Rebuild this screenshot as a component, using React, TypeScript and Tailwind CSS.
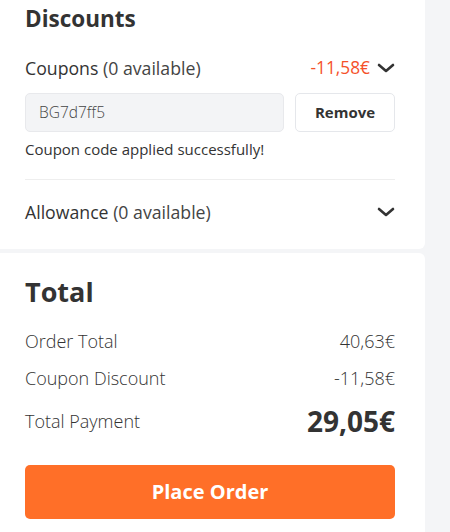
import React from "react";

function Chevron() {
  return (
    <svg width="18" height="10" viewBox="0 0 18 10" fill="none">
      <path d="M2 2 L9 8 L16 2" stroke="#333333" strokeWidth="2.6" strokeLinecap="round" strokeLinejoin="round" />
    </svg>
  );
}

export default function App() {
  return (
    <div
      className="w-[450px] min-h-[532px] bg-[#f4f5f7] text-[#333333]"
      style={{ fontFamily: '"Open Sans", "Noto Sans", sans-serif' }}
    >
      <div className="w-[425px] flex flex-col gap-[4px]">
        <div className="bg-white rounded-br-md pl-[25px] pr-[30px] pt-[4px] pb-[25px]">
          <h2 className="text-[22.5px] font-bold leading-[30px]">Discounts</h2>
          <div className="mt-[22px] flex items-center justify-between h-[24px]">
            <div className="text-[17.7px] leading-[24px]">
              <span className="font-medium text-[#333333]">Coupons</span>{" "}
              <span className="font-normal text-[#444444]">(0 available)</span>
            </div>
            <div className="flex items-center gap-[7px]">
              <span className="text-[17.3px] font-normal text-[#f5512a]">-11,58€</span>
              <Chevron />
            </div>
          </div>
          <div className="mt-[13px] flex gap-[11px]">
            <div className="flex-1 h-[39px] bg-[#f3f4f6] border border-[#e8e9ec] rounded-[5px] flex items-center px-[13px] text-[15.5px] font-light text-[#444444]">
              BG7d7ff5
            </div>
            <button className="w-[100px] h-[39px] bg-white border border-[#e5e7eb] rounded-[5px] text-[15px] font-bold text-[#333333]">
              Remove
            </button>
          </div>
          <p className="mt-[8px] text-[15px] leading-[18px] font-normal text-[#333333]">Coupon code applied successfully!</p>
          <div className="mt-[21px] border-t border-[#eeeeee]" />
          <div className="mt-[20px] flex items-center justify-between h-[24px]">
            <div className="text-[17.7px] leading-[24px]">
              <span className="font-medium text-[#333333]">Allowance</span>{" "}
              <span className="font-normal text-[#444444]">(0 available)</span>
            </div>
            <Chevron />
          </div>
        </div>
        <div className="bg-white rounded-tr-md pl-[25px] pr-[30px] pt-[22px] pb-[13px]">
          <h2 className="text-[27px] font-bold leading-[34px]">Total</h2>
          <div className="mt-[20px] flex justify-between text-[18px] leading-[24px] font-light text-[#333333]">
            <span>Order Total</span>
            <span>40,63€</span>
          </div>
          <div className="mt-[13px] flex justify-between text-[18px] leading-[24px] font-light text-[#333333]">
            <span>Coupon Discount</span>
            <span>-11,58€</span>
          </div>
          <div className="mt-[14px] flex justify-between items-center">
            <span className="text-[18px] leading-[24px] font-light text-[#333333]">Total Payment</span>
            <span className="text-[28px] leading-[34px] font-bold text-[#333333]">29,05€</span>
          </div>
          <button className="mt-[27px] w-full h-[54px] bg-[#ff6f28] rounded-[5px] text-white text-[20px] font-bold">
            Place Order
          </button>
        </div>
      </div>
    </div>
  );
}
